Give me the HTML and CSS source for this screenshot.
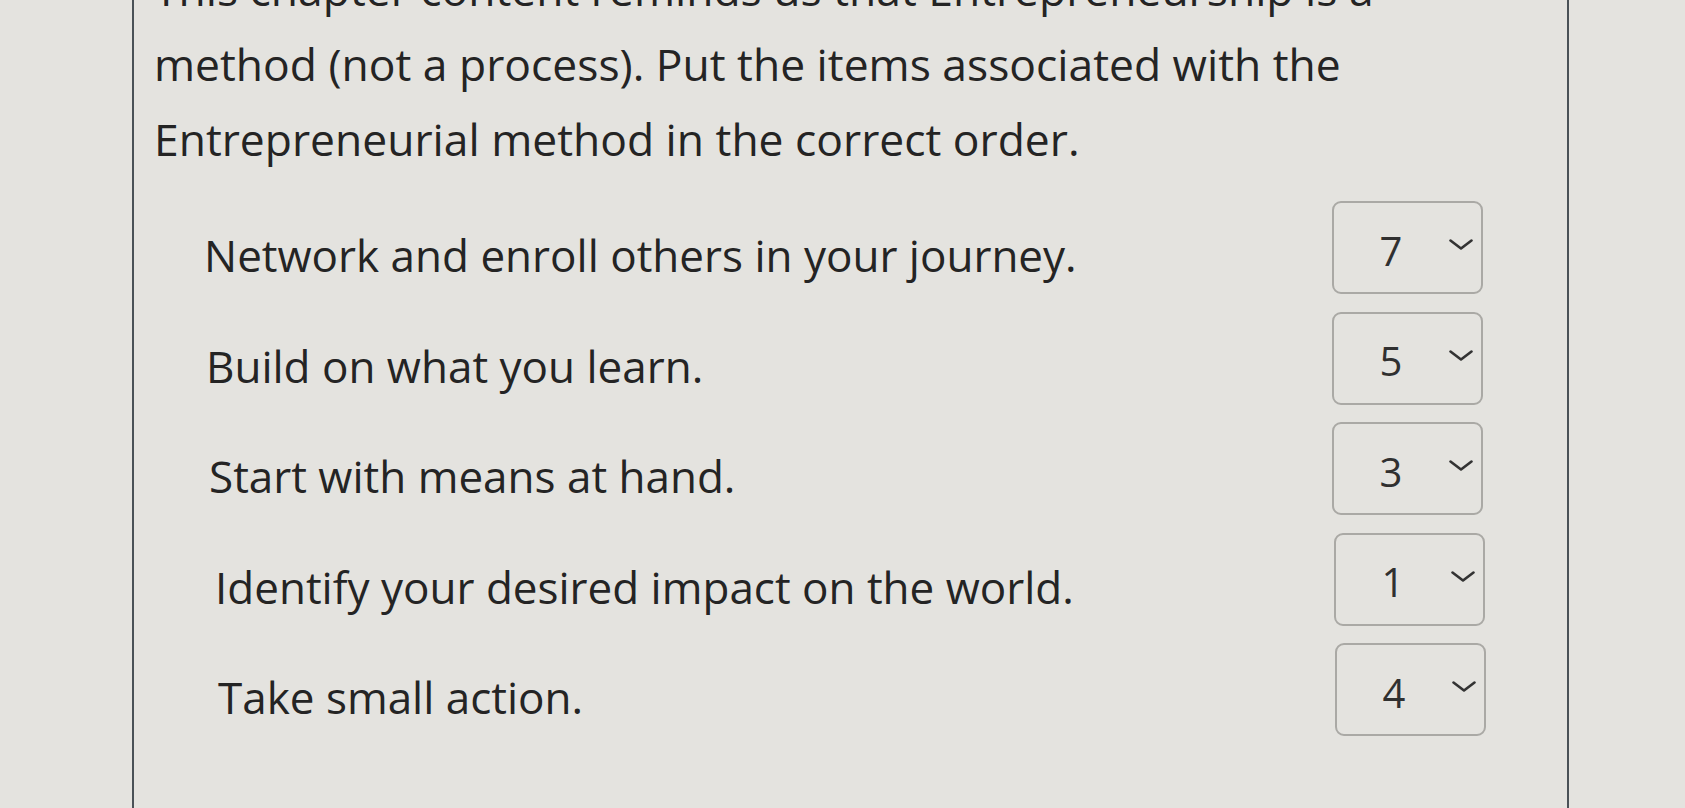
FILE: index.html
```html
<!DOCTYPE html>
<html lang="en">
<head>
<meta charset="utf-8">
<title>Entrepreneurial method</title>
<link rel="stylesheet" href="styles.css">
</head>
<body>
<main class="panel">
  <p class="prompt">This chapter content reminds us that Entrepreneurship is a<br>method (not a process). Put the items associated with the<br>Entrepreneurial method in the correct order.</p>
  <ul class="items">
    <li class="item"><span class="label">Network and enroll others in your journey.</span><span class="select"><span class="value">7</span><svg class="chev" viewBox="0 0 24 11"><path d="M1.5 1.5 L12 9.5 L22.5 1.5"/></svg></span></li>
    <li class="item item-2"><span class="label">Build on what you learn.</span><span class="select"><span class="value">5</span><svg class="chev" viewBox="0 0 24 11"><path d="M1.5 1.5 L12 9.5 L22.5 1.5"/></svg></span></li>
    <li class="item item-3"><span class="label">Start with means at hand.</span><span class="select"><span class="value">3</span><svg class="chev" viewBox="0 0 24 11"><path d="M1.5 1.5 L12 9.5 L22.5 1.5"/></svg></span></li>
    <li class="item item-4"><span class="label">Identify your desired impact on the world.</span><span class="select"><span class="value">1</span><svg class="chev" viewBox="0 0 24 11"><path d="M1.5 1.5 L12 9.5 L22.5 1.5"/></svg></span></li>
    <li class="item item-5"><span class="label">Take small action.</span><span class="select"><span class="value">4</span><svg class="chev" viewBox="0 0 24 11"><path d="M1.5 1.5 L12 9.5 L22.5 1.5"/></svg></span></li>
  </ul>
</main>
</body>
</html>
```
FILE: styles.css
```css
html, body {
  margin: 0;
  padding: 0;
  height: 100%;
  overflow: hidden;
}
body {
  background: #e4e3df;
  font-family: "Open Sans", "Noto Sans", sans-serif;
  color: #242424;
}
.panel {
  display: flow-root;
  margin-left: 132px;
  width: 1437px;
  height: 100%;
  border-left: 2px solid #4a5157;
  border-right: 2px solid #4a5157;
  box-sizing: border-box;
}
.prompt {
  margin: -48px 0 0 0;
  padding-left: 20px;
  font-size: 44.4px;
  line-height: 75px;
  white-space: nowrap;
}
.items {
  list-style: none;
  margin: 24px 0 0 0;
  padding: 0 0 0 70px;
  display: grid;
  grid-auto-rows: 92px;
  row-gap: 18.5px;
}
.item {
  display: flex;
  justify-content: space-between;
  align-items: flex-start;
  padding-right: 84px;
}
.item-2 .label { padding-left: 2px; }
.item-3 .label { padding-left: 5px; }
.item-4 .label { padding-left: 11px; }
.item-5 .label { padding-left: 14px; }
.item-4 .select { margin-right: -2px; }
.item-5 .select { margin-right: -3px; }
.label {
  font-size: 44px;
  line-height: 92px;
  padding-top: 8px;
  white-space: nowrap;
}
.select {
  width: 151px;
  height: 93px;
  box-sizing: border-box;
  border: 2px solid #aaa9a5;
  border-radius: 9px;
  display: flex;
  align-items: center;
  padding-left: 45px;
  gap: 46px;
}
.value {
  font-size: 40px;
  color: #303030;
  line-height: 1;
  width: 24px;
  text-align: center;
  margin-top: 6px;
}
.chev {
  width: 24px;
  height: 11px;
  margin-top: -6px;
  fill: none;
  stroke: #333;
  stroke-width: 2.6;
  stroke-linecap: round;
  stroke-linejoin: round;
}
```
